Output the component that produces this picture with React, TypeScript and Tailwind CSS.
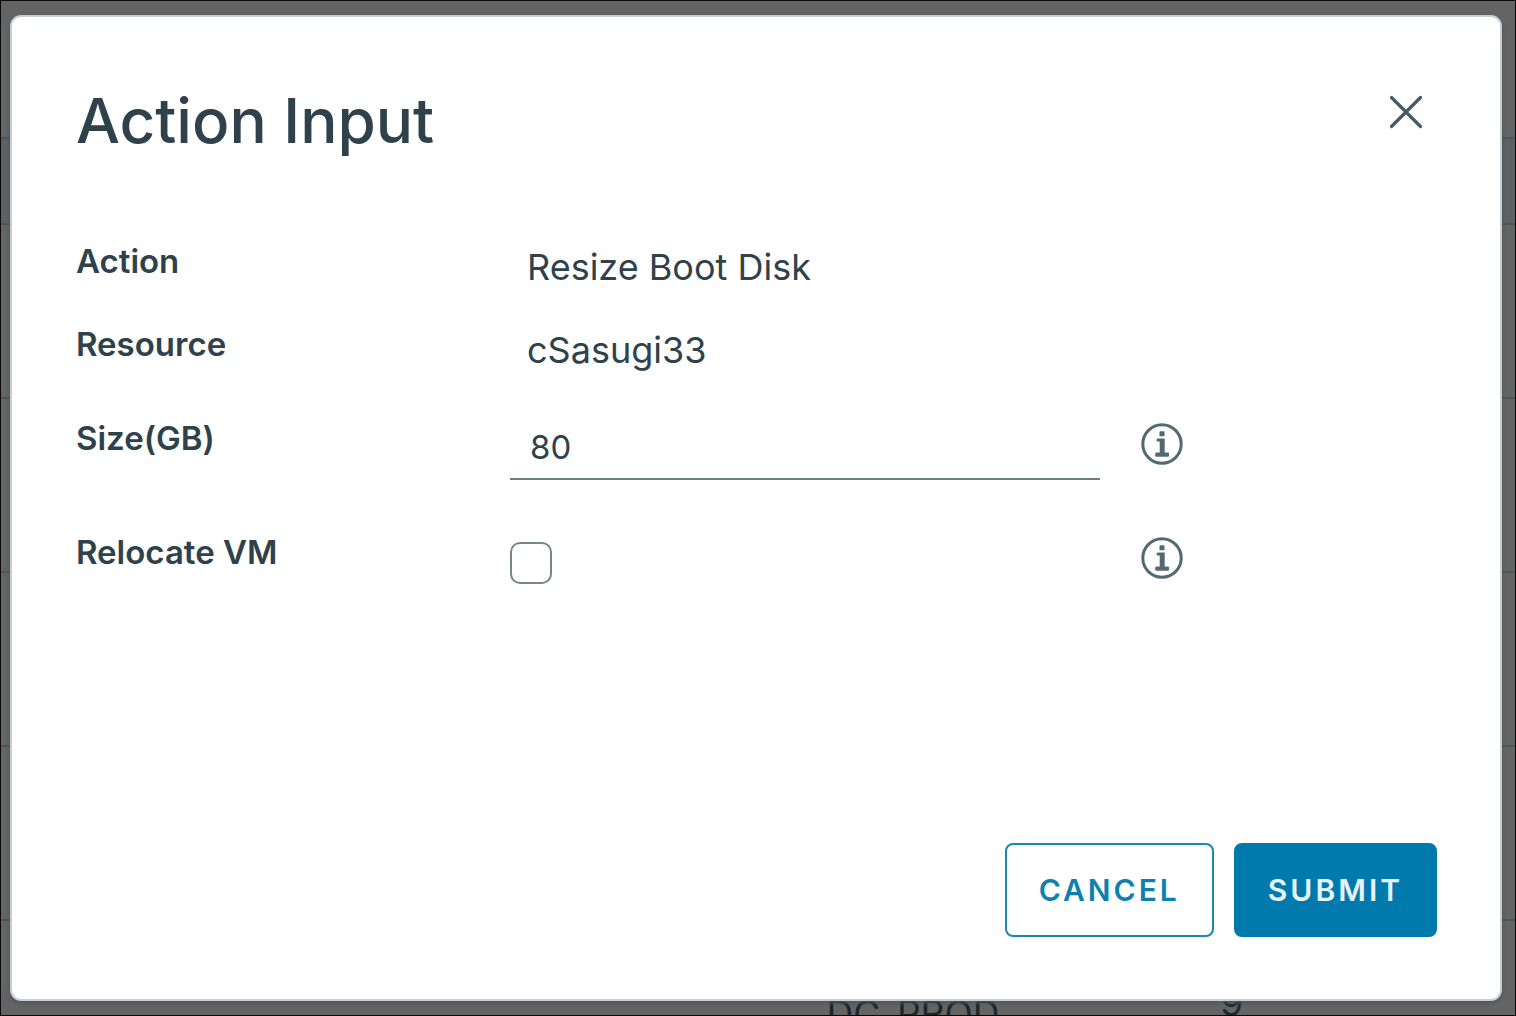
import { useState } from "react";

function CloseIcon() {
  return (
    <svg viewBox="0 0 34 34" className="size-[34px]" fill="none" stroke="currentColor" strokeWidth="3.2" strokeLinecap="round" aria-hidden="true">
      <path d="M2.5 2.5 31.5 31.5M31.5 2.5 2.5 31.5" />
    </svg>
  );
}

function InfoIcon() {
  return (
    <svg viewBox="0 0 42 42" className="size-[42px]" aria-hidden="true">
      <circle cx="21" cy="21" r="19.2" fill="none" stroke="currentColor" strokeWidth="3" />
      <rect x="18.5" y="8.3" width="5" height="5" rx="0.6" fill="currentColor" />
      <path
        d="M17 15.4h6.7v14h3a1.4 1.4 0 0 1 1.4 1.4v1.6a1.4 1.4 0 0 1-1.4 1.4H15.6a1.4 1.4 0 0 1-1.4-1.4v-1.6a1.4 1.4 0 0 1 1.4-1.4h3.1V18.6H17a1.6 1.6 0 0 1 0-3.2z"
        fill="currentColor"
      />
    </svg>
  );
}

function InfoButton({ label }: { label: string }) {
  return (
    <button type="button" aria-label={label} className="ml-[41px] mt-[9px] text-[#536971]">
      <InfoIcon />
    </button>
  );
}

function BackgroundTable() {
  return (
    <div className="absolute inset-0 overflow-hidden pt-[136px]" aria-hidden="true">
      <table className="w-full table-fixed border-collapse text-left text-[37px] leading-[48px] text-[#1c272c]">
        <colgroup>
          <col className="w-[54%]" />
          <col className="w-[26%]" />
          <col />
        </colgroup>
        <thead>
          <tr className="h-[86px] border-y-2 border-[#4f5659] bg-[#5d6163]">
            <th />
            <th />
            <th />
          </tr>
        </thead>
        <tbody>
          {[0, 1, 2, 3].map((row) => (
            <tr key={row} className="h-[174px] border-b-2 border-[#4f5659]">
              <td />
              <td />
              <td />
            </tr>
          ))}
          <tr className="h-[174px] align-top">
            <td />
            <td className="pl-2 pt-[69px]">DC_PROD</td>
            <td className="pl-2 pt-[58px]">9</td>
          </tr>
        </tbody>
      </table>
    </div>
  );
}

const rowClass = "grid grid-cols-[434fr_590fr_337fr] items-start";
const labelClass = "text-[33px] leading-[48px] font-semibold";
const valueClass = "mt-1.5 pl-[17px] text-[36px] leading-[48px]";

export default function App() {
  const [size, setSize] = useState("80");
  const [relocate, setRelocate] = useState(false);

  return (
    <div className="relative flex min-h-screen border border-[#0a0a0a] bg-[#646464] pt-[14px] pr-[13px] pb-[14px] pl-[9px] font-['Inter',sans-serif]">
      <BackgroundTable />
      <div
        role="dialog"
        aria-modal="true"
        aria-labelledby="dialog-title"
        className="relative flex flex-1 flex-col rounded-[11px] border-2 border-[#c3cfd4] bg-white pt-[63px] pr-[63px] pb-[62px] pl-16 text-[#2f424b] shadow-[0_2px_4px_#4d5659]"
      >
        <header className="flex items-start justify-between">
          <h1 id="dialog-title" className="text-[62px] leading-[82px] font-medium">
            Action Input
          </h1>
          <button type="button" aria-label="Close" className="flex h-16 w-[62px] items-center justify-center text-[#465a63]">
            <CloseIcon />
          </button>
        </header>
        <form className="mt-[75px] flex flex-1 flex-col" onSubmit={(e) => e.preventDefault()}>
          <dl>
            <div className={`${rowClass} h-[83px]`}>
              <dt className={labelClass}>Action</dt>
              <dd className={valueClass}>Resize Boot Disk</dd>
            </div>
            <div className={`${rowClass} h-[94px]`}>
              <dt className={labelClass}>Resource</dt>
              <dd className={valueClass}>cSasugi33</dd>
            </div>
          </dl>
          <div className={`${rowClass} h-[114px]`}>
            <label htmlFor="size" className={labelClass}>
              Size(GB)
            </label>
            <input
              id="size"
              type="text"
              value={size}
              onChange={(e) => setSize(e.target.value)}
              className="h-[66px] w-full min-w-0 border-b-2 border-[#6b7c84] bg-transparent px-5 pt-0.5 text-[33px] outline-none"
            />
            <InfoButton label="About size" />
          </div>
          <div className={rowClass}>
            <label htmlFor="relocate" className={labelClass}>
              Relocate VM
            </label>
            <input
              id="relocate"
              type="checkbox"
              checked={relocate}
              onChange={(e) => setRelocate(e.target.checked)}
              className="mt-[14px] size-[42px] appearance-none rounded-[10px] border-2 border-[#75868d] bg-white checked:bg-[#0079ad]"
            />
            <InfoButton label="About relocating the VM" />
          </div>
          <footer className="mt-auto flex justify-end gap-5">
            <button
              type="button"
              className="h-[94px] rounded-lg border-2 border-[#1a87b5] px-8 text-[30px] font-semibold tracking-widest text-[#0f7fb0]"
            >
              CANCEL
            </button>
            <button
              type="submit"
              className="h-[94px] rounded-lg border-2 border-[#0079ad] bg-[#0079ad] px-8 text-[30px] font-semibold tracking-widest text-[#e6f4fa]"
            >
              SUBMIT
            </button>
          </footer>
        </form>
      </div>
    </div>
  );
}
